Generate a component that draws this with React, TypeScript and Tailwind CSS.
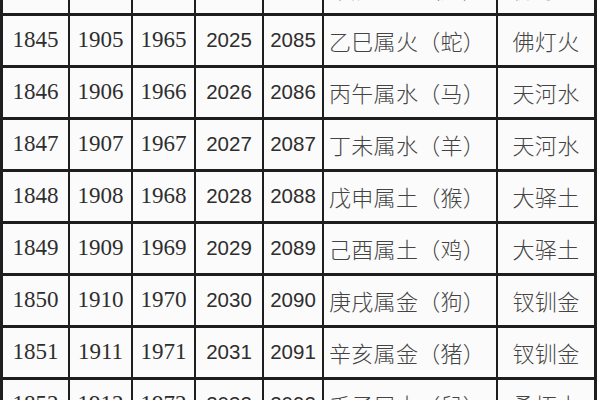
import React from "react";

const rows: string[][] = [
  ["1844", "1904", "1964", "2024", "2084", "甲辰属火（龙）", "佛灯火"],
  ["1845", "1905", "1965", "2025", "2085", "乙巳属火（蛇）", "佛灯火"],
  ["1846", "1906", "1966", "2026", "2086", "丙午属水（马）", "天河水"],
  ["1847", "1907", "1967", "2027", "2087", "丁未属水（羊）", "天河水"],
  ["1848", "1908", "1968", "2028", "2088", "戊申属土（猴）", "大驿土"],
  ["1849", "1909", "1969", "2029", "2089", "己酉属土（鸡）", "大驿土"],
  ["1850", "1910", "1970", "2030", "2090", "庚戌属金（狗）", "钗钏金"],
  ["1851", "1911", "1971", "2031", "2091", "辛亥属金（猪）", "钗钏金"],
  ["1852", "1912", "1972", "2032", "2092", "壬子属木（鼠）", "桑柘木"],
];

const serif = { fontFamily: '"Liberation Serif", serif' };

export default function App() {
  return (
    <div className="w-[600px] h-[400px] overflow-hidden bg-white">
      <div className="w-[597px] -mt-[36px] bg-[#1e1e1e] border-x-[3px] border-[#1e1e1e] grid grid-cols-[65px_61px_61px_66px_58px_172px_96px] gap-x-[2px] gap-y-[3px]">
        {rows.map((r, i) => (
          <React.Fragment key={i}>
            {r.map((c, j) => (
              <div
                key={j}
                className={
                  "h-[49px] bg-[#fbfbfb] flex items-center text-[#2e2e2e] " +
                  (j === 5 ? "justify-start pl-[5px]" : "justify-center")
                }
              >
                {j < 3 ? (
                  <span className="text-[23px]" style={serif}>
                    {c}
                  </span>
                ) : j < 5 ? (
                  <span className="text-[20.5px]" style={{ fontFamily: '"Liberation Sans", sans-serif' }}>
                    {c}
                  </span>
                ) : (
                  <span
                    className="text-[22px] text-[#444444] tracking-[0.3px]"
                    style={{ fontFamily: '"Noto Sans CJK SC", sans-serif', fontWeight: 300 }}
                  >
                    {c}
                  </span>
                )}
              </div>
            ))}
          </React.Fragment>
        ))}
      </div>
    </div>
  );
}
